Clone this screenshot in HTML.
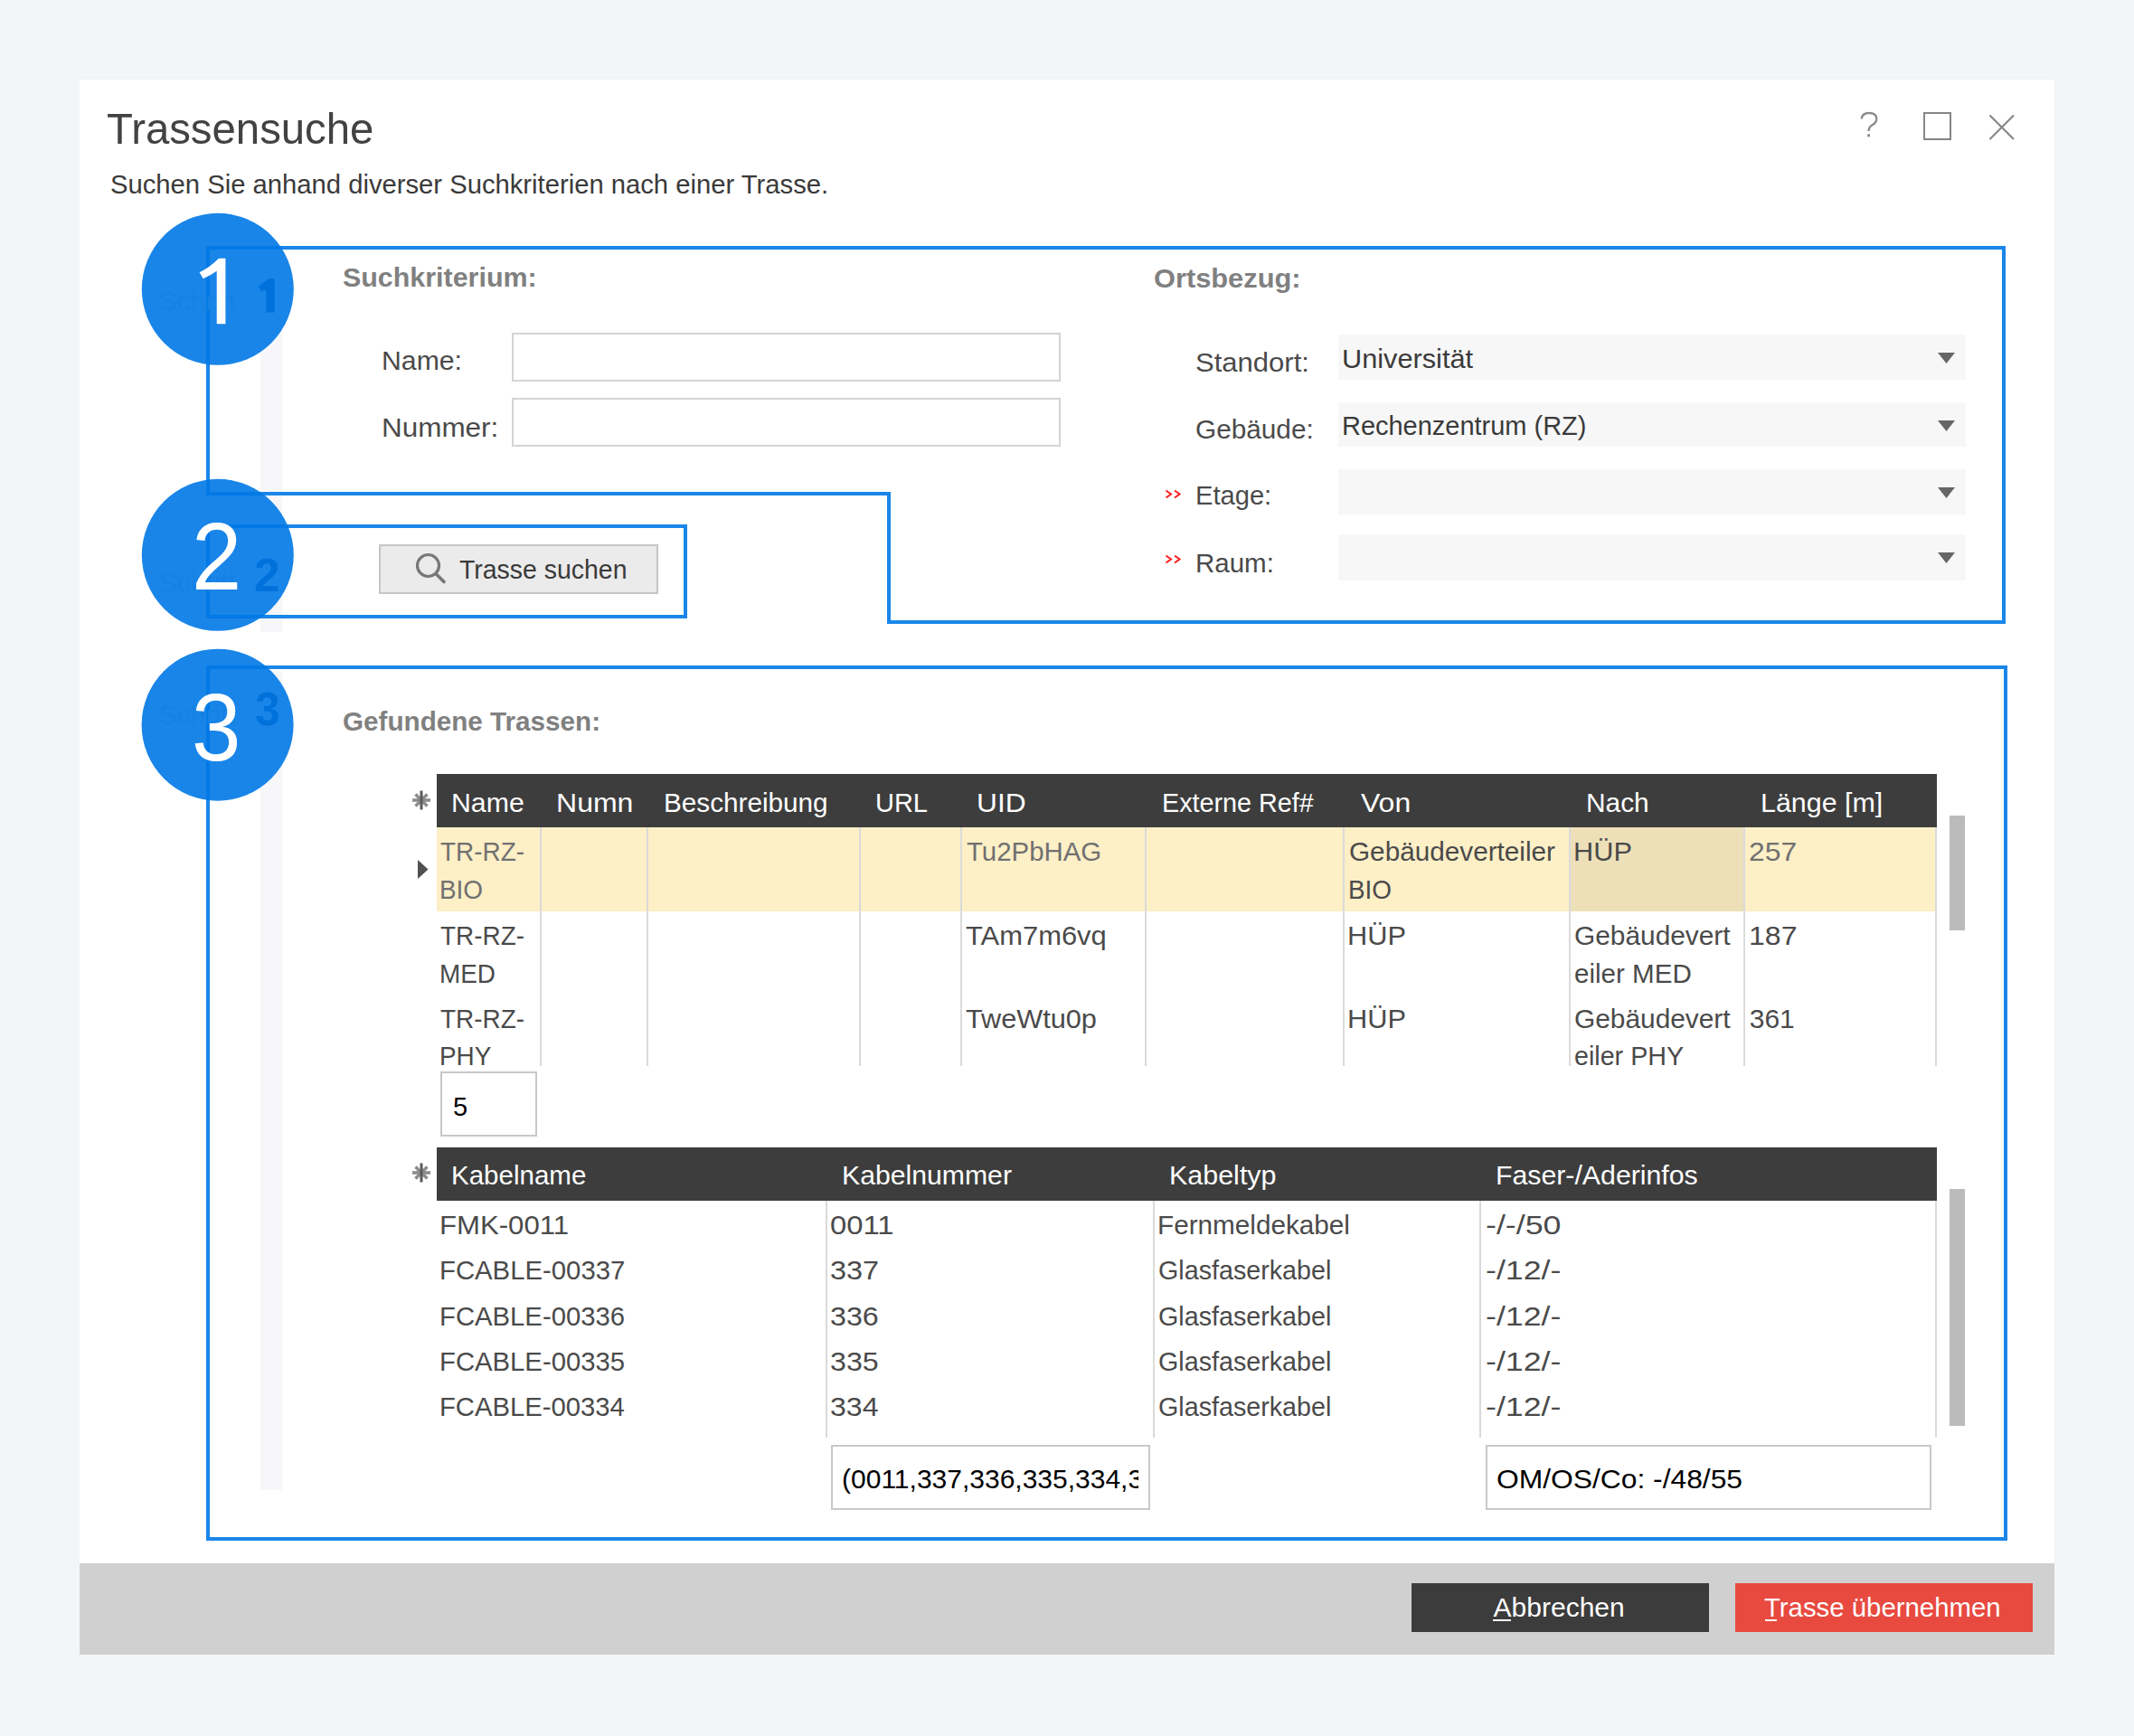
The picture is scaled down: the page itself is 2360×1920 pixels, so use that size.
<!DOCTYPE html>
<html><head><meta charset="utf-8"><title>Trassensuche</title>
<style>
html,body{margin:0;padding:0;}
body{width:2360px;height:1920px;background:#f4f5f9;position:relative;overflow:hidden;font-family:'Liberation Sans', sans-serif;}
.a{position:absolute;}
.t{position:absolute;white-space:nowrap;transform-origin:0 0;}
svg.a{overflow:visible;}
</style></head><body>
<div class="a" style="left:88px;top:88px;width:2184px;height:1742px;background:#ffffff;"></div>
<div class="a" style="left:88px;top:1729px;width:2184px;height:101px;background:#d0d0d0;"></div>
<div class="t" style="left:117.73px;top:118.00px;font-size:49px;line-height:49px;color:#424242;transform:scaleX(0.9655);">Trassensuche</div>
<div class="t" style="left:122.18px;top:188.60px;font-size:30px;line-height:30px;color:#3a3a3a;transform:scaleX(0.9738);">Suchen Sie anhand diverser Suchkriterien nach einer Trasse.</div>
<svg class="a" style="left:2040px;top:110px" width="220" height="60" viewBox="2040 110 220 60">
<rect x="2128" y="125" width="29" height="29" fill="none" stroke="#858585" stroke-width="2"/>
<path d="M2200.5 127.5 L2227 154 M2227 127.5 L2200.5 154" stroke="#858585" stroke-width="2.1" fill="none"/>
</svg>
<svg class="a" style="left:2040px;top:110px" width="60" height="60" viewBox="2040 110 60 60"><path d="M2058.6 131.5 Q2059.5 125 2067 125 Q2075.3 125 2075.3 131.5 Q2075.3 135.5 2070.5 138.3 Q2066.6 140.6 2066.6 145" fill="none" stroke="#8a8a8a" stroke-width="2.3"/><rect x="2065.2" y="148.3" width="2.8" height="3" fill="#8a8a8a"/></svg>
<div class="a" style="left:288px;top:300px;width:24px;height:399px;background:#f7f7fa;"></div>
<div class="a" style="left:288px;top:742px;width:24px;height:906px;background:#f7f7fa;"></div>
<div class="t" style="left:379.39px;top:291.80px;font-size:30px;line-height:30px;color:#808080;transform:scaleX(1.0139);font-weight:bold;">Suchkriterium:</div>
<div class="t" style="left:422.18px;top:383.60px;font-size:30px;line-height:30px;color:#4a4a4a;transform:scaleX(1.0072);">Name:</div>
<div class="t" style="left:422.08px;top:458.40px;font-size:30px;line-height:30px;color:#4a4a4a;transform:scaleX(1.0483);">Nummer:</div>
<div class="a" style="left:566px;top:368px;width:607px;height:54px;background:#fff;box-sizing:border-box;border:2px solid #d4d4d4;"></div>
<div class="a" style="left:566px;top:440px;width:607px;height:54px;background:#fff;box-sizing:border-box;border:2px solid #d4d4d4;"></div>
<div class="t" style="left:1276.22px;top:292.50px;font-size:30px;line-height:30px;color:#808080;transform:scaleX(1.0263);font-weight:bold;">Ortsbezug:</div>
<div class="t" style="left:1322.11px;top:386.20px;font-size:30px;line-height:30px;color:#4a4a4a;transform:scaleX(1.0344);">Standort:</div>
<div class="t" style="left:1321.91px;top:460.20px;font-size:30px;line-height:30px;color:#4a4a4a;transform:scaleX(0.9922);">Gebäude:</div>
<div class="t" style="left:1322.07px;top:532.90px;font-size:30px;line-height:30px;color:#4a4a4a;transform:scaleX(0.9706);">Etage:</div>
<div class="t" style="left:1321.64px;top:607.90px;font-size:30px;line-height:30px;color:#4a4a4a;transform:scaleX(0.9831);">Raum:</div>
<svg class="a" style="left:1286px;top:539.8px" width="24" height="15" viewBox="0 0 24 15"><path d="M3.5 2.5 L9 6.5 L3.5 10.5 M13 2.5 L18.5 6.5 L13 10.5" stroke="#ff2020" stroke-width="2.1" fill="none"/></svg>
<svg class="a" style="left:1286px;top:612.0px" width="24" height="15" viewBox="0 0 24 15"><path d="M3.5 2.5 L9 6.5 L3.5 10.5 M13 2.5 L18.5 6.5 L13 10.5" stroke="#ff2020" stroke-width="2.1" fill="none"/></svg>
<div class="a" style="left:1480px;top:370px;width:694px;height:50px;background:#f7f7f7;"></div>
<svg class="a" style="left:2140px;top:388px" width="26" height="16" viewBox="0 0 26 16"><path d="M3 2 H22 L12.5 14 Z" fill="#666"/></svg>
<div class="a" style="left:1480px;top:445px;width:694px;height:49px;background:#f7f7f7;"></div>
<svg class="a" style="left:2140px;top:463px" width="26" height="16" viewBox="0 0 26 16"><path d="M3 2 H22 L12.5 14 Z" fill="#666"/></svg>
<div class="a" style="left:1480px;top:519px;width:694px;height:50px;background:#f7f7f7;"></div>
<svg class="a" style="left:2140px;top:537px" width="26" height="16" viewBox="0 0 26 16"><path d="M3 2 H22 L12.5 14 Z" fill="#666"/></svg>
<div class="a" style="left:1480px;top:591px;width:694px;height:51px;background:#f7f7f7;"></div>
<svg class="a" style="left:2140px;top:609px" width="26" height="16" viewBox="0 0 26 16"><path d="M3 2 H22 L12.5 14 Z" fill="#666"/></svg>
<div class="t" style="left:1484.20px;top:381.80px;font-size:30px;line-height:30px;color:#3a3a3a;transform:scaleX(1.0233);">Universität</div>
<div class="t" style="left:1484.09px;top:456.20px;font-size:30px;line-height:30px;color:#3a3a3a;transform:scaleX(0.9654);">Rechenzentrum (RZ)</div>
<div class="a" style="left:419px;top:602px;width:309px;height:55px;background:#ebebeb;box-sizing:border-box;border:2px solid #c6c6c6;"></div>
<svg class="a" style="left:450px;top:604px" width="50" height="50" viewBox="450 604 50 50">
<circle cx="473.5" cy="625.5" r="12" fill="none" stroke="#777" stroke-width="3.2"/>
<path d="M482 634.5 L491 643.5" stroke="#777" stroke-width="3.6" stroke-linecap="round"/>
</svg>
<div class="t" style="left:508.29px;top:614.60px;font-size:30px;line-height:30px;color:#3a3a3a;transform:scaleX(0.9482);">Trasse suchen</div>
<div class="t" style="left:379.36px;top:782.80px;font-size:30px;line-height:30px;color:#808080;transform:scaleX(0.9884);font-weight:bold;">Gefundene Trassen:</div>
<div class="a" style="left:483px;top:856px;width:1659px;height:59px;background:#3d3d3d;"></div>
<div class="a" style="left:483px;top:915px;width:1659px;height:93px;background:#fdefc6;"></div>
<div class="a" style="left:1736px;top:915px;width:193px;height:93px;background:#ede0b9;"></div>
<div class="a" style="left:597px;top:915px;width:2px;height:264px;background:#dadada;"></div>
<div class="a" style="left:715px;top:915px;width:2px;height:264px;background:#dadada;"></div>
<div class="a" style="left:950px;top:915px;width:2px;height:264px;background:#dadada;"></div>
<div class="a" style="left:1062px;top:915px;width:2px;height:264px;background:#dadada;"></div>
<div class="a" style="left:1266px;top:915px;width:2px;height:264px;background:#dadada;"></div>
<div class="a" style="left:1485px;top:915px;width:2px;height:264px;background:#dadada;"></div>
<div class="a" style="left:1735px;top:915px;width:2px;height:264px;background:#dadada;"></div>
<div class="a" style="left:1928px;top:915px;width:2px;height:264px;background:#dadada;"></div>
<div class="a" style="left:2140px;top:915px;width:2px;height:264px;background:#dadada;"></div>
<div class="t" style="left:498.98px;top:873.30px;font-size:30px;line-height:30px;color:#ffffff;transform:scaleX(1.0085);">Name</div>
<div class="t" style="left:615.03px;top:873.30px;font-size:30px;line-height:30px;color:#ffffff;transform:scaleX(1.0675);">Numn</div>
<div class="t" style="left:734.03px;top:873.30px;font-size:30px;line-height:30px;color:#ffffff;transform:scaleX(0.9899);">Beschreibung</div>
<div class="t" style="left:967.73px;top:873.30px;font-size:30px;line-height:30px;color:#ffffff;transform:scaleX(0.9656);">URL</div>
<div class="t" style="left:1079.92px;top:873.30px;font-size:30px;line-height:30px;color:#ffffff;transform:scaleX(1.0563);">UID</div>
<div class="t" style="left:1284.51px;top:873.30px;font-size:30px;line-height:30px;color:#ffffff;transform:scaleX(0.9577);">Externe Ref#</div>
<div class="t" style="left:1504.53px;top:873.30px;font-size:30px;line-height:30px;color:#ffffff;transform:scaleX(1.0667);">Von</div>
<div class="t" style="left:1753.51px;top:873.30px;font-size:30px;line-height:30px;color:#ffffff;transform:scaleX(0.9954);">Nach</div>
<div class="t" style="left:1946.87px;top:873.30px;font-size:30px;line-height:30px;color:#ffffff;transform:scaleX(1.0136);">Länge [m]</div>
<svg class="a" style="left:454px;top:873px" width="24" height="24" viewBox="-12 -12 24 24">
<g stroke="#8c8c8c" stroke-width="3.6"><path d="M-10 0 H10"/><path d="M-6.5 -6.5 L6.5 6.5"/><path d="M-6.5 6.5 L6.5 -6.5"/></g>
<circle r="4" fill="#8c8c8c"/><path d="M0 -10.5 V10.5" stroke="#5a5a5a" stroke-width="3"/></svg>
<svg class="a" style="left:460px;top:950px" width="16" height="24" viewBox="0 0 16 24"><path d="M2 1 L13.5 11.5 L2 22 Z" fill="#505050"/></svg>
<div class="t" style="left:486.80px;top:927.10px;font-size:30px;line-height:30px;color:#707070;transform:scaleX(0.9300);">TR-RZ-</div>
<div class="t" style="left:1068.97px;top:927.10px;font-size:30px;line-height:30px;color:#707070;transform:scaleX(0.9796);">Tu2PbHAG</div>
<div class="t" style="left:1491.61px;top:927.10px;font-size:30px;line-height:30px;color:#4a4a4a;transform:scaleX(0.9906);">Gebäudeverteiler</div>
<div class="t" style="left:1739.94px;top:927.10px;font-size:30px;line-height:30px;color:#4a4a4a;transform:scaleX(1.0245);">HÜP</div>
<div class="t" style="left:1933.91px;top:927.10px;font-size:30px;line-height:30px;color:#707070;transform:scaleX(1.0617);">257</div>
<div class="t" style="left:486.48px;top:969.30px;font-size:30px;line-height:30px;color:#707070;transform:scaleX(0.9300);">BIO</div>
<div class="t" style="left:1490.77px;top:969.30px;font-size:30px;line-height:30px;color:#4a4a4a;transform:scaleX(0.9300);">BIO</div>
<div class="t" style="left:486.80px;top:1020.00px;font-size:30px;line-height:30px;color:#4a4a4a;transform:scaleX(0.9300);">TR-RZ-</div>
<div class="t" style="left:1068.33px;top:1020.00px;font-size:30px;line-height:30px;color:#4a4a4a;transform:scaleX(1.0303);">TAm7m6vq</div>
<div class="t" style="left:1489.84px;top:1020.00px;font-size:30px;line-height:30px;color:#4a4a4a;transform:scaleX(1.0245);">HÜP</div>
<div class="t" style="left:1741.01px;top:1020.00px;font-size:30px;line-height:30px;color:#4a4a4a;transform:scaleX(0.9951);">Gebäudevert</div>
<div class="t" style="left:1933.60px;top:1020.00px;font-size:30px;line-height:30px;color:#4a4a4a;transform:scaleX(1.0681);">187</div>
<div class="t" style="left:486.28px;top:1061.50px;font-size:30px;line-height:30px;color:#4a4a4a;transform:scaleX(0.9300);">MED</div>
<div class="t" style="left:1741.27px;top:1061.50px;font-size:30px;line-height:30px;color:#4a4a4a;transform:scaleX(0.9853);">eiler MED</div>
<div class="t" style="left:486.80px;top:1111.50px;font-size:30px;line-height:30px;color:#4a4a4a;transform:scaleX(0.9300);">TR-RZ-</div>
<div class="t" style="left:1068.33px;top:1111.50px;font-size:30px;line-height:30px;color:#4a4a4a;transform:scaleX(1.0225);">TweWtu0p</div>
<div class="t" style="left:1489.84px;top:1111.50px;font-size:30px;line-height:30px;color:#4a4a4a;transform:scaleX(1.0245);">HÜP</div>
<div class="t" style="left:1741.01px;top:1111.50px;font-size:30px;line-height:30px;color:#4a4a4a;transform:scaleX(0.9951);">Gebäudevert</div>
<div class="t" style="left:1934.75px;top:1111.50px;font-size:30px;line-height:30px;color:#4a4a4a;">361</div>
<div class="t" style="left:486.28px;top:1153.40px;font-size:30px;line-height:30px;color:#4a4a4a;transform:scaleX(0.9300);">PHY</div>
<div class="t" style="left:1741.31px;top:1153.40px;font-size:30px;line-height:30px;color:#4a4a4a;transform:scaleX(0.9555);">eiler PHY</div>
<div class="a" style="left:487px;top:1185px;width:107px;height:72px;background:#fff;box-sizing:border-box;border:2px solid #c8c8c8;"></div>
<div class="t" style="left:500.79px;top:1208.50px;font-size:30px;line-height:30px;color:#000000;transform:scaleX(0.9684);">5</div>
<div class="a" style="left:483px;top:1269px;width:1659px;height:59px;background:#3d3d3d;"></div>
<div class="a" style="left:913px;top:1328px;width:2px;height:262px;background:#dadada;"></div>
<div class="a" style="left:1275px;top:1328px;width:2px;height:262px;background:#dadada;"></div>
<div class="a" style="left:1636px;top:1328px;width:2px;height:262px;background:#dadada;"></div>
<div class="a" style="left:2140px;top:1328px;width:2px;height:262px;background:#dadada;"></div>
<div class="t" style="left:499.24px;top:1285.00px;font-size:30px;line-height:30px;color:#ffffff;transform:scaleX(0.9838);">Kabelname</div>
<div class="t" style="left:930.98px;top:1285.00px;font-size:30px;line-height:30px;color:#ffffff;transform:scaleX(1.0063);">Kabelnummer</div>
<div class="t" style="left:1293.06px;top:1285.00px;font-size:30px;line-height:30px;color:#ffffff;transform:scaleX(1.0150);">Kabeltyp</div>
<div class="t" style="left:1654.28px;top:1285.00px;font-size:30px;line-height:30px;color:#ffffff;transform:scaleX(1.0089);">Faser-/Aderinfos</div>
<svg class="a" style="left:454px;top:1285px" width="24" height="24" viewBox="-12 -12 24 24">
<g stroke="#8c8c8c" stroke-width="3.6"><path d="M-10 0 H10"/><path d="M-6.5 -6.5 L6.5 6.5"/><path d="M-6.5 6.5 L6.5 -6.5"/></g>
<circle r="4" fill="#8c8c8c"/><path d="M0 -10.5 V10.5" stroke="#5a5a5a" stroke-width="3"/></svg>
<div class="t" style="left:485.90px;top:1340.00px;font-size:30px;line-height:30px;color:#4a4a4a;transform:scaleX(1.0381);">FMK-0011</div>
<div class="t" style="left:918.43px;top:1340.00px;font-size:30px;line-height:30px;color:#4a4a4a;transform:scaleX(1.0931);">0011</div>
<div class="t" style="left:1279.93px;top:1340.00px;font-size:30px;line-height:30px;color:#4a4a4a;transform:scaleX(0.9898);">Fernmeldekabel</div>
<div class="t" style="left:1642.91px;top:1340.00px;font-size:30px;line-height:30px;color:#4a4a4a;transform:scaleX(1.1911);">-/-/50</div>
<div class="t" style="left:486.06px;top:1390.20px;font-size:30px;line-height:30px;color:#4a4a4a;transform:scaleX(0.9770);">FCABLE-00337</div>
<div class="t" style="left:918.45px;top:1390.20px;font-size:30px;line-height:30px;color:#4a4a4a;transform:scaleX(1.0794);">337</div>
<div class="t" style="left:1280.97px;top:1390.20px;font-size:30px;line-height:30px;color:#4a4a4a;transform:scaleX(0.9560);">Glasfaserkabel</div>
<div class="t" style="left:1642.91px;top:1390.20px;font-size:30px;line-height:30px;color:#4a4a4a;transform:scaleX(1.1911);">-/12/-</div>
<div class="t" style="left:486.06px;top:1440.50px;font-size:30px;line-height:30px;color:#4a4a4a;transform:scaleX(0.9758);">FCABLE-00336</div>
<div class="t" style="left:918.46px;top:1440.50px;font-size:30px;line-height:30px;color:#4a4a4a;transform:scaleX(1.0737);">336</div>
<div class="t" style="left:1280.97px;top:1440.50px;font-size:30px;line-height:30px;color:#4a4a4a;transform:scaleX(0.9560);">Glasfaserkabel</div>
<div class="t" style="left:1642.91px;top:1440.50px;font-size:30px;line-height:30px;color:#4a4a4a;transform:scaleX(1.1911);">-/12/-</div>
<div class="t" style="left:486.06px;top:1490.80px;font-size:30px;line-height:30px;color:#4a4a4a;transform:scaleX(0.9758);">FCABLE-00335</div>
<div class="t" style="left:918.46px;top:1490.80px;font-size:30px;line-height:30px;color:#4a4a4a;transform:scaleX(1.0737);">335</div>
<div class="t" style="left:1280.97px;top:1490.80px;font-size:30px;line-height:30px;color:#4a4a4a;transform:scaleX(0.9560);">Glasfaserkabel</div>
<div class="t" style="left:1642.91px;top:1490.80px;font-size:30px;line-height:30px;color:#4a4a4a;transform:scaleX(1.1911);">-/12/-</div>
<div class="t" style="left:486.06px;top:1541.00px;font-size:30px;line-height:30px;color:#4a4a4a;transform:scaleX(0.9746);">FCABLE-00334</div>
<div class="t" style="left:918.46px;top:1541.00px;font-size:30px;line-height:30px;color:#4a4a4a;transform:scaleX(1.0681);">334</div>
<div class="t" style="left:1280.97px;top:1541.00px;font-size:30px;line-height:30px;color:#4a4a4a;transform:scaleX(0.9560);">Glasfaserkabel</div>
<div class="t" style="left:1642.91px;top:1541.00px;font-size:30px;line-height:30px;color:#4a4a4a;transform:scaleX(1.1911);">-/12/-</div>
<div class="a" style="left:2156px;top:902px;width:17px;height:127px;background:#bbbbbb;"></div>
<div class="a" style="left:2156px;top:1315px;width:17px;height:262px;background:#bbbbbb;"></div>
<div class="a" style="left:919px;top:1598px;width:353px;height:72px;background:#fff;box-sizing:border-box;border:2px solid #c8c8c8;"></div>
<div class="a" style="left:0;top:1610.6px;width:1259px;height:50px;overflow:hidden"><div class="t" style="left:931.05px;top:1620.60px;font-size:30px;line-height:30px;color:#000000;top:10px">(0011,337,336,335,334,337</div></div>
<div class="a" style="left:1643px;top:1598px;width:493px;height:72px;background:#fff;box-sizing:border-box;border:2px solid #c8c8c8;"></div>
<div class="t" style="left:1655.11px;top:1620.70px;font-size:30px;line-height:30px;color:#000000;transform:scaleX(1.0594);">OM/OS/Co: -/48/55</div>
<div class="a" style="left:1561px;top:1751px;width:329px;height:54px;background:#3c3c3c;"></div>
<div class="a" style="left:1919px;top:1751px;width:329px;height:54px;background:#e84a40;"></div>
<div class="t" style="left:1651.60px;top:1763.30px;font-size:30px;line-height:30px;color:#ffffff;">Abbrechen</div>
<div class="a" style="left:1651px;top:1791px;width:20px;height:2px;background:#ffffff;"></div>
<div class="t" style="left:1951.27px;top:1763.30px;font-size:30px;line-height:30px;color:#ffffff;transform:scaleX(0.9783);">Trasse übernehmen</div>
<div class="a" style="left:1952px;top:1791px;width:13px;height:2px;background:#ffffff;"></div>
<svg class="a" style="left:0;top:0" width="2360" height="1920" viewBox="0 0 2360 1920">
<path d="M230 274 H2216 V688 H983 V546 H230 Z" fill="none" stroke="#1a86e9" stroke-width="4"/>
<rect x="230" y="582" width="528" height="100" fill="none" stroke="#1a86e9" stroke-width="4"/>
<rect x="230" y="738" width="1988" height="964" fill="none" stroke="#1a86e9" stroke-width="4"/>
</svg>
<div class="t" style="left:175.75px;top:318.00px;font-size:30px;line-height:30px;color:#d0d0d0;">Schritt</div>
<svg class="a" style="left:0;top:0" width="400" height="400" viewBox="0 0 400 400"><path d="M303.6 308 V345.6 H294.4 V320.5 L288.6 322.5 L285.7 317 L297.5 308 Z" fill="#003878"/></svg>
<div class="t" style="left:175.75px;top:629.00px;font-size:30px;line-height:30px;color:#d0d0d0;">Schritt</div>
<div class="t" style="left:281.17px;top:610.00px;font-size:52px;line-height:52px;color:#003878;transform:scaleX(0.9880);font-weight:bold;">2</div>
<div class="t" style="left:175.75px;top:776.00px;font-size:30px;line-height:30px;color:#d0d0d0;">Schritt</div>
<div class="t" style="left:281.80px;top:757.70px;font-size:52px;line-height:52px;color:#003878;transform:scaleX(0.9631);font-weight:bold;">3</div>
<svg class="a" style="left:0;top:0" width="400" height="920" viewBox="0 0 400 920">
<circle cx="240.8" cy="319.8" r="84" fill="rgba(0,120,230,0.9)"/>
<circle cx="240.8" cy="613.8" r="84" fill="rgba(0,120,230,0.9)"/>
<circle cx="240.6" cy="801.7" r="84" fill="rgba(0,120,230,0.9)"/>
</svg>
<svg class="a" style="left:0;top:0" width="400" height="400" viewBox="0 0 400 400"><path d="M249.4 285.7 V358.2 H239.7 V299.8 Q233 304.5 224.7 308.3 L220.6 301.2 Q231.5 296 242 285.7 Z" fill="#ffffff"/></svg>
<div class="t" style="left:211.63px;top:563.30px;font-size:105px;line-height:105px;color:#ffffff;transform:scaleX(0.9458);">2</div>
<div class="t" style="left:212.18px;top:752.20px;font-size:105px;line-height:105px;color:#ffffff;transform:scaleX(0.9307);">3</div>
</body></html>
